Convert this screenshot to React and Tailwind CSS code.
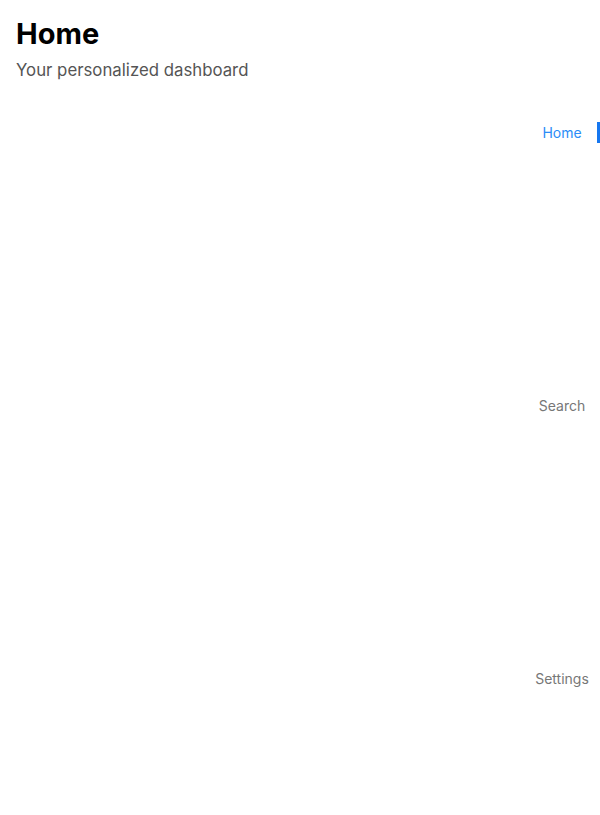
import React, { useState } from "react";

const tabs = ["Home", "Search", "Settings"];

const App = () => {
  const [active, setActive] = useState("Home");

  return (
    <div
      className="h-screen overflow-hidden bg-white flex flex-col"
      style={{ fontFamily: "Inter, 'Noto Sans', sans-serif" }}
    >
      {/* Page header */}
      <header className="px-4 pt-4">
        <h1 className="text-[29px] leading-9 font-bold text-black">{active}</h1>
        <p className="mt-1.5 text-[16.8px] leading-6 text-[#555]">Your personalized dashboard</p>
      </header>

      {/* Content + vertical tab bar */}
      <div className="flex flex-1 mt-10 min-h-0">
        <main className="flex-1" />

        <nav className="w-[76px] flex flex-col">
          {tabs.map((tab) => {
            const isActive = tab === active;
            return (
              <div key={tab} className="h-[273px] shrink-0">
                <button
                  onClick={() => setActive(tab)}
                  className="relative w-full h-[21px] flex items-center justify-center"
                >
                  <span
                    className={
                      isActive
                        ? "text-sm leading-5 text-[#2b8cf7]"
                        : "text-sm leading-5 text-[#777]"
                    }
                  >
                    {tab}
                  </span>
                  {isActive && (
                    <span className="absolute right-0 top-0 h-[21px] w-[3px] bg-[#1677f0]" />
                  )}
                </button>
              </div>
            );
          })}
        </nav>
      </div>
    </div>
  );
};

export default App;
